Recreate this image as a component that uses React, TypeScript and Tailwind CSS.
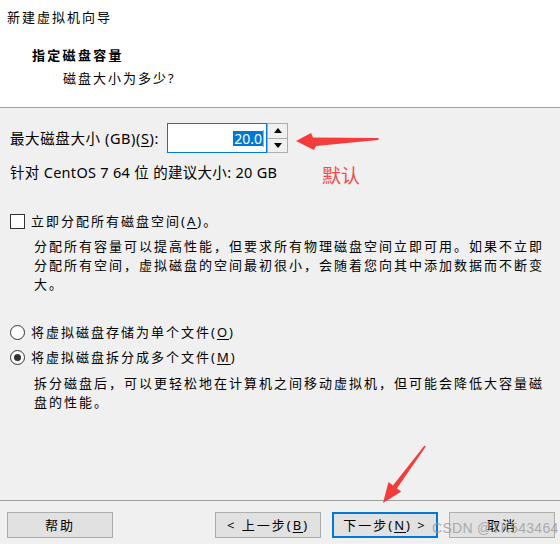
import React from "react";

// Wizard page fonts: the pixel-hinted dialog text is narrow glyphs on a wide advance,
// so it is approximated with a small size plus tracking.
const FONT = "font-[family-name:'Noto_Sans','Noto_Sans_CJK_SC',sans-serif]";
const PIXEL = "text-[13px] tracking-[2px] leading-[19px]";
// the smoother UI font used by the size field row
const SMOOTH = "text-[14.5px] leading-[19px]";

function Key({ k }: { k: string }) {
  return (
    <>
      (<span className="underline underline-offset-2">{k}</span>)
    </>
  );
}

function Checkbox() {
  return <span className="w-[15px] h-[15px] border border-[#333] bg-white shrink-0" />;
}

function Radio({ checked }: { checked?: boolean }) {
  return (
    <span className="w-[15px] h-[15px] rounded-full border border-[#333] bg-white shrink-0 flex items-center justify-center">
      {checked && <span className="w-[7px] h-[7px] rounded-full bg-[#333]" />}
    </span>
  );
}

function Button({ children, focused }: { children: React.ReactNode; focused?: boolean }) {
  return (
    <button
      type="button"
      className={
        "w-[106px] h-[26px] bg-[#e1e1e1] flex items-center justify-center text-black " +
        PIXEL +
        (focused ? " border-2 border-[#0078d7]" : " border border-[#adadad]")
      }
    >
      {children}
    </button>
  );
}

function Spinner() {
  return (
    <div className="w-[21px] h-[30px] border border-[#adadad] flex flex-col bg-[#f0f0f0]">
      <div className="flex-1 flex items-center justify-center border-b border-[#adadad]">
        <svg width="8" height="5" viewBox="0 0 8 5">
          <path d="M0 5 L4 0 L8 5 Z" fill="#000" />
        </svg>
      </div>
      <div className="flex-1 flex items-center justify-center">
        <svg width="8" height="5" viewBox="0 0 8 5">
          <path d="M0 0 L8 0 L4 5 Z" fill="#000" />
        </svg>
      </div>
    </div>
  );
}

export default function App() {
  return (
    <div className={`relative w-[560px] h-[544px] bg-[#f0f0f0] flex flex-col text-black overflow-hidden ${FONT}`}>
      {/* header */}
      <div className="h-[108px] bg-white border-b border-[#a0a0a0] flex flex-col">
        <div className={`pl-[7px] pt-[8px] ${PIXEL}`}>新建虚拟机向导</div>
        <div className="pl-[32px] mt-[19px] text-[13px] font-bold tracking-[2.3px] leading-[19px]">指定磁盘容量</div>
        <div className={`pl-[63px] mt-[4px] ${PIXEL}`}>磁盘大小为多少?</div>
      </div>

      {/* body */}
      <div className="flex-1 flex flex-col">
        <div className="mt-[15px] pl-[10px] flex items-center">
          <span className={`w-[157px] shrink-0 whitespace-nowrap ${SMOOTH} tracking-[0.6px]`}>
            最大磁盘大小 (GB)<Key k="S" />:
          </span>
          <div className="w-[100px] h-[30px] border border-[#0078d7] bg-white flex items-center justify-end pr-[2px]">
            <span className="bg-[#0078d7] text-white text-[14px] leading-[15px] px-[1px]">20.0</span>
            <span className="w-[1px] h-[17px] bg-[#f7a033]" />
          </div>
          <Spinner />
        </div>
        <div className={`mt-[10px] pl-[10px] ${SMOOTH} tracking-[0.3px]`}>
          针对 CentOS 7 64 位 的建议大小: 20 GB
        </div>

        <div className="mt-[30px] pl-[10px] flex items-center gap-[6px]">
          <Checkbox />
          <span className={PIXEL}>
            立即分配所有磁盘空间<Key k="A" />。
          </span>
        </div>
        <p className={`mt-[6px] pl-[34px] pr-[10px] ${PIXEL} tracking-[1.9px]`}>
          分配所有容量可以提高性能，但要求所有物理磁盘空间立即可用。如果不立即分配所有空间，虚拟磁盘的空间最初很小，会随着您向其中添加数据而不断变大。
        </p>

        <div className="mt-[29px] pl-[10px] flex items-center gap-[6px]">
          <Radio />
          <span className={PIXEL}>
            将虚拟磁盘存储为单个文件<Key k="O" />
          </span>
        </div>
        <div className="mt-[6px] pl-[10px] flex items-center gap-[6px]">
          <Radio checked />
          <span className={PIXEL}>
            将虚拟磁盘拆分成多个文件<Key k="M" />
          </span>
        </div>
        <p className={`mt-[7px] pl-[34px] pr-[10px] ${PIXEL} tracking-[1.9px]`}>
          拆分磁盘后，可以更轻松地在计算机之间移动虚拟机，但可能会降低大容量磁盘的性能。
        </p>
      </div>

      {/* footer */}
      <div className="h-[44px] border-t border-[#a0a0a0] flex items-start pt-[11px] pl-[7px] pr-[5px]">
        <Button>帮助</Button>
        <div className="flex-1" />
        <div className="flex gap-[11px]">
          <Button>
            &lt; 上一步<Key k="B" />
          </Button>
          <Button focused>
            下一步<Key k="N" /> &gt;
          </Button>
          <Button>取消</Button>
        </div>
      </div>

      {/* screenshot annotations */}
      <span className="absolute left-[322px] top-[164px] text-[19px] leading-[24px] text-[#f34b4b]">默认</span>
      <svg className="absolute left-0 top-0 pointer-events-none" width="560" height="544" viewBox="0 0 560 544">
        <polygon
          points="296,141 311,133 313,137.5 378,138 379,139 378,140 316,146 314,150"
          fill="#f43c3c"
        />
        <polygon
          points="383,503 388.5,482 392.9,485.4 424.5,445.6 425.8,446.6 396.9,488.4 401.3,491.6"
          fill="#f43c3c"
        />
      </svg>
      <span className="absolute left-[432px] top-[518px] text-[14px] leading-[20px] text-[#9a9a9a]/80 font-[family-name:'Liberation_Sans',sans-serif] tracking-[0.3px]">
        CSDN @TK543464
      </span>
    </div>
  );
}
